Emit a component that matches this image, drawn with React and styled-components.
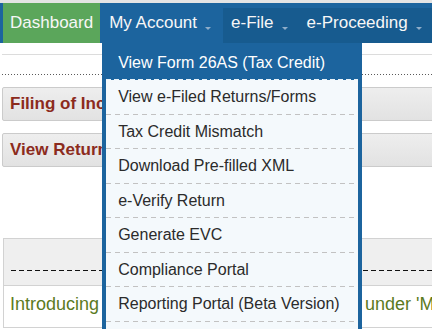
import styled, { createGlobalStyle } from "styled-components";

const GlobalStyle = createGlobalStyle`
  html, body {
    margin: 0;
    padding: 0;
    background: #fff;
    font-family: "Liberation Sans", Arial, sans-serif;
  }
  body {
    overflow: hidden;
  }
`;

const accountLinks = [
  "View Form 26AS (Tax Credit)",
  "View e-Filed Returns/Forms",
  "Tax Credit Mismatch",
  "Download Pre-filled XML",
  "e-Verify Return",
  "Generate EVC",
  "Compliance Portal",
  "Reporting Portal (Beta Version)",
];

const App = () => {
  return (
    <Page>
      <GlobalStyle />
      <TopStrip />
      {/* main menu */}
      <NavBar>
        <NavItem $home>Dashboard</NavItem>
        <MenuWrap>
          <NavItem>
            My Account
            <Caret />
          </NavItem>
          <Dropdown>
            {accountLinks.map((label, i) => (
              <DropItem key={label} $active={i === 0}>
                {label}
              </DropItem>
            ))}
          </Dropdown>
        </MenuWrap>
        <NavGroup>
          <NavItem>
            e-File
            <Caret />
          </NavItem>
          <NavItem>
            e-Proceeding
            <Caret />
          </NavItem>
        </NavGroup>
      </NavBar>

      {/* page body */}
      <Content>
        <Rule />
        <DottedRule />
        <SectionTab>Filing of Income Tax Returns / Forms</SectionTab>
        <SectionTab>View Returns / Forms</SectionTab>
        <Panel>
          <PanelHead>
            <DashedRule />
          </PanelHead>
          <PanelBody>
            Introducing 'Reporting Portal (Beta Version)' under 'My Account'
          </PanelBody>
        </Panel>
      </Content>
    </Page>
  );
};

export default App;

const Page = styled.div`
  width: 432px;
  min-height: 329px;
  overflow: hidden;
`;

const TopStrip = styled.div`
  height: 3px;
  background: #e4e4e4;
`;

const NavBar = styled.nav`
  height: 40px;
  display: flex;
  align-items: stretch;
  gap: 1px;
  padding-left: 3px;
  background: #1c649e;
`;

const NavItem = styled.div`
  display: flex;
  align-items: center;
  gap: 8px;
  padding: ${(p) => (p.$home ? "0 7px" : "0 11px 0 8px")};
  background: ${(p) => (p.$home ? "#5ba65b" : "transparent")};
  color: #f7f7f7;
  font-size: 17px;
  white-space: nowrap;
  cursor: pointer;
`;

const Caret = styled.span`
  width: 0;
  height: 0;
  margin-top: 10px;
  border-left: 3px solid transparent;
  border-right: 3px solid transparent;
  border-top: 3px solid #8fadc9;
`;

const NavGroup = styled.div`
  flex: 1;
  display: flex;
  background: linear-gradient(to bottom, transparent 5px, #175b8f 5px);
`;

const MenuWrap = styled.div`
  position: relative;
  display: flex;
`;

const Dropdown = styled.ul`
  position: absolute;
  top: 40px;
  left: 1px;
  z-index: 10;
  box-sizing: border-box;
  width: 260px;
  margin: 0;
  padding: 0 0 24px;
  list-style: none;
  background: #f4f9fc;
  border-left: 4px solid #1c649e;
  border-right: 4px solid #1c649e;
`;

const DropItem = styled.li`
  box-sizing: border-box;
  height: ${(p) => (p.$active ? "37px" : "34.5px")};
  padding: ${(p) => (p.$active ? "2px 0 0 12px" : "0 0 0 12px")};
  display: flex;
  align-items: center;
  font-size: 16px;
  white-space: nowrap;
  color: ${(p) => (p.$active ? "#fff" : "#2b2b2b")};
  background: ${(p) =>
    p.$active
      ? "linear-gradient(to right, #e9f2f8 5px, transparent 5px) left bottom / 8px 1px repeat-x, #1c649e"
      : "linear-gradient(to right, #c2c2c2 5px, transparent 5px) left bottom / 9px 1px repeat-x"};
`;

const Content = styled.div`
  padding: 11px 0 0 2px;
`;

const Rule = styled.div`
  height: 1px;
  background: #dcdcdc;
`;

const DottedRule = styled.div`
  height: 1px;
  margin-top: 19px;
  background: linear-gradient(to right, #5a5a5a 1px, transparent 1px) 0 0 / 3px 1px repeat-x;
`;

const SectionTab = styled.div`
  box-sizing: border-box;
  height: 34px;
  margin: 12px -6px 0 0;
  padding-left: 7px;
  display: flex;
  align-items: center;
  border: 1px solid #cbcbcb;
  border-radius: 2px;
  background: linear-gradient(to bottom, #eeeeee, #e2e2e2);
  color: #8c2b1d;
  font-size: 17px;
  font-weight: bold;
  white-space: nowrap;
`;

const Panel = styled.div`
  margin: 71px -6px 0 1px;
  border: 1px solid #d2d2d2;
`;

const PanelHead = styled.div`
  height: 47px;
  padding: 31px 0 0 7px;
  box-sizing: border-box;
  background: #efefef;
  border-bottom: 1px solid #d2d2d2;
`;

const DashedRule = styled.div`
  height: 1px;
  background: linear-gradient(to right, #111 5px, transparent 5px) 0 0 / 8px 1px repeat-x;
`;

const PanelBody = styled.div`
  padding: 8px 0 12px 6px;
  color: #5b7a22;
  font-size: 18px;
  white-space: nowrap;
`;
